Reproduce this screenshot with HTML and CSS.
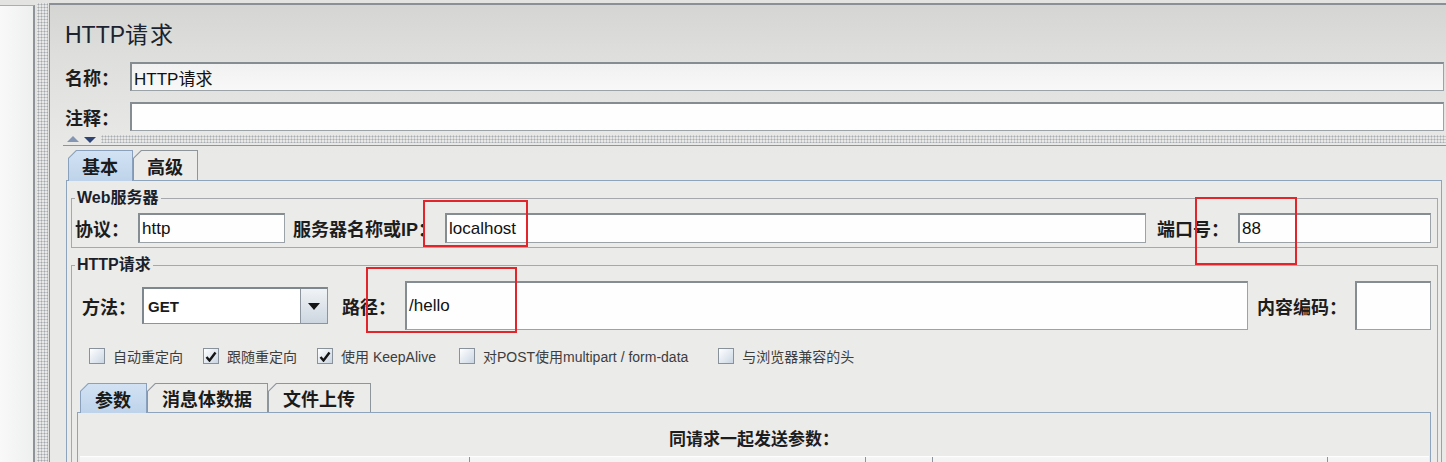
FILE: index.html
```html
<!DOCTYPE html>
<html lang="zh">
<head>
<meta charset="utf-8">
<title>HTTP请求</title>
<link rel="stylesheet" href="styles.css">
</head>
<body>
<div class="app">
  <aside class="tree"></aside>
  <div class="vsplit"></div>
  <main class="main">
    <h1 class="title">HTTP<span class="title-cjk">请求</span></h1>
    <div class="meta-row">
      <span class="meta-label">名称：</span>
      <div class="field field-name">HTTP请求</div>
    </div>
    <div class="meta-row meta-row-comment">
      <span class="meta-label">注释：</span>
      <div class="field"></div>
    </div>
    <div class="hsplit">
      <span class="arrows">
        <svg width="30" height="7" viewBox="0 0 30 7"><polygon points="0,6 6,0 12,6" fill="#8496b2"/><polygon points="17,1 29,1 23,7" fill="#2e4474"/></svg>
      </span>
      <span class="dots"></span>
    </div>
    <div class="tabs">
      <div class="tab tab-active"><span>基本</span></div>
      <div class="tab"><span>高级</span></div>
    </div>
    <div class="tabpanel">
      <fieldset class="group group-web">
        <legend>Web服务器</legend>
        <div class="web-row">
          <span class="lbl lbl-proto">协议：</span>
          <div class="field f-proto">http</div>
          <span class="lbl lbl-server">服务器名称或IP：</span>
          <div class="field f-server">localhost</div>
          <span class="lbl lbl-port">端口号：</span>
          <div class="field f-port">88</div>
        </div>
      </fieldset>
      <fieldset class="group group-http">
        <legend>HTTP请求</legend>
        <div class="req-row">
          <span class="lbl lbl-method">方法：</span>
          <div class="combo">
            <div class="combo-val">GET</div>
            <div class="combo-btn"><svg width="12" height="7" viewBox="0 0 12 7"><polygon points="0,0 12,0 6,7" fill="#151515"/></svg></div>
          </div>
          <span class="lbl lbl-path">路径：</span>
          <div class="field f-path">/hello</div>
          <span class="lbl lbl-enc">内容编码：</span>
          <div class="field f-enc"></div>
        </div>
        <div class="checks">
          <label class="check"><span class="cb"></span>自动重定向</label>
          <label class="check"><span class="cb"><svg width="12" height="11" viewBox="0 0 12 11"><path d="M1.5 6 L4.5 9.5 L10.5 1.5" fill="none" stroke="#151515" stroke-width="2.4"/></svg></span>跟随重定向</label>
          <label class="check"><span class="cb"><svg width="12" height="11" viewBox="0 0 12 11"><path d="M1.5 6 L4.5 9.5 L10.5 1.5" fill="none" stroke="#151515" stroke-width="2.4"/></svg></span>使用 KeepAlive</label>
          <label class="check check-wide"><span class="cb"></span>对POST使用multipart / form-data</label>
          <label class="check"><span class="cb"></span>与浏览器兼容的头</label>
        </div>
        <div class="params">
          <div class="tabs tabs-sub">
            <div class="tab tab-active"><span>参数</span></div>
            <div class="tab"><span>消息体数据</span></div>
            <div class="tab"><span>文件上传</span></div>
          </div>
          <div class="subpanel">
            <div class="caption">同请求一起发送参数：</div>
            <div class="thead"><div></div><div></div><div></div><div></div><div></div></div>
          </div>
        </div>
      </fieldset>
    </div>
  </main>
  <div class="mark mark-host"></div>
  <div class="mark mark-port"></div>
  <div class="mark mark-path"></div>
</div>
</body>
</html>
```
FILE: styles.css
```css
* { box-sizing: border-box; margin: 0; padding: 0; }
html, body { width: 1446px; height: 462px; overflow: hidden; background: #e4e5e3; }
body { font-family: "Liberation Sans", "Noto Sans CJK SC", sans-serif; color: #1a1a1a; }

.app { position: relative; display: flex; height: 462px; padding-top: 3px; background: #e3e4e2; overflow: hidden; }

.tree { width: 35px; flex: none; margin-top: 2px; border-top: 1px solid #a9aeb3; border-right: 2px solid #8d9399; background: linear-gradient(90deg, #f8f9f8, #eef0ef); }

.vsplit { width: 14px; flex: none; padding: 0 1px 0 2px; background-color: #e7e8e7; background-image: radial-gradient(circle, #a2a7ac 0.8px, transparent 1.2px); background-size: 3px 3px; background-clip: content-box; background-origin: content-box; }

.main { flex: 1; min-width: 0; display: flex; flex-direction: column; border-left: 1px solid #8a9197; border-top: 2px solid #8a9096; background: linear-gradient(#d5d6d4 0, #dedfdd 50px, #e5e6e4 110px, #e9eae8 150px); overflow: hidden; }

.title { height: 44px; padding: 16px 0 0 15px; font-size: 23px; line-height: 28px; font-weight: 400; color: #1c2230; }
.title-cjk { letter-spacing: 2px; }

.meta-row { display: flex; align-items: center; height: 29px; margin-top: 13px; padding: 0 2px 0 15px; }
.meta-row-comment { margin-top: 11px; }
.meta-label { width: 65px; flex: none; font-size: 18px; font-weight: 700; color: #1d1d1d; }

.field { height: 100%; display: flex; align-items: center; padding-left: 2px; font-size: 17px; color: #111; background: #fefefe; border: 1px solid #9ba2a8; border-top: 2px solid #858c92; border-left: 2px solid #858c92; white-space: nowrap; overflow: hidden; }
.meta-row .field { flex: 1; }
.field-name { background: linear-gradient(#f0f1f0, #f7f8f7); }

.hsplit { display: flex; align-items: stretch; height: 12px; margin: 3px 0 0 13px; padding: 1px 0 2px; border-bottom: 1px solid #8d959b; }
.arrows { display: flex; align-items: center; padding: 0 4px 0 4px; }
.dots { flex: 1; background-image: radial-gradient(circle, #a8adb2 0.8px, transparent 1.2px); background-size: 3px 3px; }

.tabs { display: flex; align-items: flex-end; height: 30px; margin-top: 4px; padding-left: 18px; position: relative; z-index: 1; }
.tab { height: 30px; padding: 1px 1px 0 1px; background: #8e959b; clip-path: polygon(8px 0, 100% 0, 100% 100%, 0 100%, 0 8px); }
.tab > span { display: flex; align-items: center; height: 100%; padding: 0 14px 0 13px; font-size: 18px; font-weight: 700; color: #1b1b1b; background: #ebebea; clip-path: polygon(7.6px 0, 100% 0, 100% 100%, 0 100%, 0 7.6px); }
.tab-active { height: 31px; margin-bottom: -1px; background: #8aa1bd; }
.tab-active > span { background: linear-gradient(#d2e2f3, #bed3ea); }

.tabpanel { flex: 1; margin: 0 4px 0 16px; padding: 8px 3px 0 4px; border: 1px solid #8ea3bc; border-bottom: none; background: #ebebea; overflow: hidden; }

.group { border: 1px solid #a5a9ad; padding: 0 6px 4px 3px; min-width: 0; }
.group legend { padding: 0 2px; font-size: 16px; line-height: 18px; font-weight: 700; color: #1a1f2b; }
.group-http { margin-top: 8px; height: 300px; }

.lbl { flex: none; font-size: 18px; font-weight: 700; color: #1d1d1d; white-space: nowrap; }

.web-row { display: flex; align-items: center; height: 30px; margin-top: 6px; }
.lbl-proto { width: 63px; }
.f-proto { width: 147px; flex: none; }
.lbl-server { width: 152px; margin-left: 8px; }
.f-server { flex: 1; }
.lbl-port { width: 81px; margin-left: 11px; }
.f-port { width: 193px; flex: none; }

.req-row { display: flex; align-items: center; height: 49px; margin-top: 7px; padding-left: 7px; }
.lbl-method { width: 60px; }
.combo { display: flex; width: 186px; height: 37px; flex: none; border: 1px solid #8d959b; border-top: 2px solid #7f878e; border-left: 2px solid #7f878e; }
.combo-val { flex: 1; display: flex; align-items: center; padding-left: 4px; font-size: 15px; font-weight: 700; background: #fff; }
.combo-btn { width: 27px; display: flex; align-items: center; justify-content: center; border-left: 1px solid #8d969e; background: linear-gradient(#f0f3f6, #cdd6e0); }
.lbl-path { width: 63px; margin-left: 14px; }
.f-path { flex: 1; }
.lbl-enc { width: 98px; margin-left: 9px; }
.f-enc { width: 76px; flex: none; }

.checks { display: flex; align-items: center; gap: 20px; height: 20px; margin-top: 16px; padding-left: 14px; }
.check { display: flex; align-items: center; gap: 8px; font-size: 14px; color: #3d3d3d; white-space: nowrap; }
.check-wide { margin-left: 3px; margin-right: 10px; }
.cb { width: 16px; height: 16px; flex: none; display: flex; align-items: center; justify-content: center; border: 1px solid #89929a; background: linear-gradient(135deg, #ffffff, #cad6e3); }

.params { margin: 17px 0 0 2px; }
.tabs-sub { height: 29px; margin-top: 0; padding-left: 3px; }
.tabs-sub .tab { height: 29px; }
.tabs-sub .tab-active { height: 30px; }
.tabs-sub .tab > span { padding: 0 15px 0 14px; }
.subpanel { height: 200px; border: 1px solid #8ea3bc; border-bottom: none; background: #ebebea; }
.caption { height: 43px; padding-top: 5px; display: flex; align-items: center; justify-content: center; font-size: 17px; font-weight: 700; color: #1d1d1d; }
.thead { display: grid; grid-template-columns: 390px 396px 67px 395px 1fr; height: 30px; margin: 0 1px 0 2px; border-top: 1px solid #fdfdfd; background: linear-gradient(#f6f6f6, #e1e1e1); }
.thead > div { border-right: 1px solid #8c9399; }
.thead > div:last-child { border-right: none; }

.mark { position: absolute; border: 2px solid #e3242b; }
.mark-host { left: 423px; top: 200px; width: 105px; height: 47px; }
.mark-port { left: 1195px; top: 197px; width: 102px; height: 68px; }
.mark-path { left: 366px; top: 267px; width: 151px; height: 66px; }
```
